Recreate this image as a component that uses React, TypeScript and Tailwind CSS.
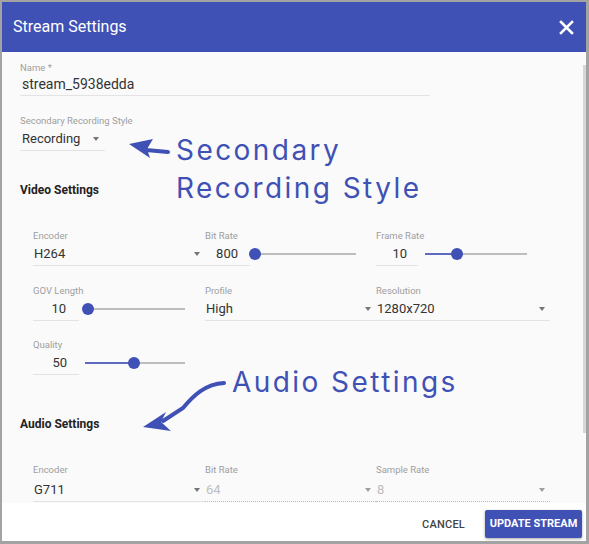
import React from "react";

function Label({ children }: { children: React.ReactNode }) {
  return <div className="whitespace-nowrap text-[9.5px] leading-[12px] text-[#9e9e9e]">{children}</div>;
}

function Caret({ light }: { light?: boolean }) {
  return (
    <span
      className={
        light
          ? "h-0 w-0 border-x-[3.5px] border-t-[4px] border-x-transparent border-t-[#9e9e9e]"
          : "h-0 w-0 border-x-[3.5px] border-t-[4px] border-x-transparent border-t-[#757575]"
      }
    />
  );
}

function Select({ value, disabled }: { value: string; disabled?: boolean }) {
  return (
    <div
      className={
        disabled
          ? "flex h-[24px] items-center justify-between border-b border-dotted border-[#bdbdbd] pr-[5px]"
          : "flex h-[24px] items-center justify-between border-b border-[#e3e3e3] pr-[5px]"
      }
    >
      <span className={disabled ? "pl-[1px] text-[13px] text-[#bdbdbd]" : "pl-[1px] text-[13px] text-[#333]"}>{value}</span>
      <Caret light={disabled} />
    </div>
  );
}

function NumInput({ value, className }: { value: string; className: string }) {
  return (
    <div className={"flex h-[24px] items-center justify-end border-b border-[#e3e3e3] text-[13px] text-[#333] " + className}>
      {value}
    </div>
  );
}

function Slider({ pct, className }: { pct: number; className: string }) {
  return (
    <div className={"relative h-[12px] " + className}>
      <div className="absolute left-0 right-0 top-[5px] h-[2px] bg-[#bdbdbd]" />
      <div className="absolute left-0 top-[5px] h-[2px] bg-[#5c6bc0]" style={{ width: pct + "%" }} />
      <div
        className="absolute top-0 h-[12px] w-[12px] -translate-x-1/2 rounded-full bg-[#3f51b5]"
        style={{ left: pct + "%" }}
      />
    </div>
  );
}

export default function App() {
  return (
    <div className="relative h-[544px] w-[589px] bg-[#a3a3a3] pb-[3px] pl-[2px] pr-[3px] pt-[2px] font-['Roboto',sans-serif]">
      <div className="flex h-full flex-col overflow-hidden">
        {/* header */}
        <div className="flex h-[50px] shrink-0 items-center justify-between bg-[#3f51b5] pl-[11px] pr-[12px]">
          <span className="text-[16px] text-white">Stream Settings</span>
          <svg width="15" height="15" viewBox="0 0 15 15">
            <path d="M2 2 L13 13 M13 2 L2 13" stroke="white" strokeWidth="2.6" strokeLinecap="square" />
          </svg>
        </div>

        {/* body */}
        <div className="relative min-h-0 flex-1 overflow-hidden bg-[#fafafa] pl-[18px] pt-[10px]">
          <div className="absolute right-0 top-[13px] h-[368px] w-[3px] bg-[#d6d6d6]" />

          <div className="w-[410px]">
            <Label>Name *</Label>
            <div className="flex h-[22px] items-center border-b border-[#e3e3e3] pl-[2px] text-[14px] text-[#333]">
              stream_5938edda
            </div>
          </div>

          <div className="mt-[19px] w-[85px]">
            <Label>Secondary Recording Style</Label>
            <div className="flex h-[24px] items-center justify-between border-b border-[#e3e3e3] pl-[2px] pr-[6px]">
              <span className="text-[13px] text-[#333]">Recording</span>
              <Caret />
            </div>
          </div>

          <div className="mt-[32px] text-[12px] font-bold leading-[14px] text-[#222]">Video Settings</div>

          <div className="ml-[13px] mt-[33px] grid w-[517px] grid-cols-[172px_171px_174px]">
            <div>
              <Label>Encoder</Label>
              <Select value="H264" />
            </div>
            <div>
              <Label>Bit Rate</Label>
              <div className="flex items-center">
                <NumInput value="800" className="w-[45px] pr-[12px]" />
                <Slider pct={0} className="ml-[5px] w-[101px]" />
              </div>
            </div>
            <div>
              <Label>Frame Rate</Label>
              <div className="flex items-center">
                <NumInput value="10" className="w-[42px] pr-[11px]" />
                <Slider pct={31} className="ml-[7px] w-[102px]" />
              </div>
            </div>
          </div>

          <div className="ml-[13px] mt-[19px] grid w-[517px] grid-cols-[172px_171px_174px]">
            <div>
              <Label>GOV Length</Label>
              <div className="flex items-center">
                <NumInput value="10" className="w-[46px] pr-[13px]" />
                <Slider pct={0} className="ml-[9px] w-[97px]" />
              </div>
            </div>
            <div>
              <Label>Profile</Label>
              <Select value="High" />
            </div>
            <div>
              <Label>Resolution</Label>
              <Select value="1280x720" />
            </div>
          </div>

          <div className="ml-[13px] mt-[18px] w-[172px]">
            <Label>Quality</Label>
            <div className="flex items-center">
              <NumInput value="50" className="w-[46px] pr-[12px]" />
              <Slider pct={49} className="ml-[6px] w-[100px]" />
            </div>
          </div>

          <div className="mt-[42px] text-[12px] font-bold leading-[14px] text-[#222]">Audio Settings</div>

          <div className="ml-[13px] mt-[33px] grid w-[517px] grid-cols-[172px_171px_174px]">
            <div>
              <Label>Encoder</Label>
              <div className="pt-[2px]">
                <Select value="G711" />
              </div>
            </div>
            <div>
              <Label>Bit Rate</Label>
              <div className="pt-[2px]">
                <Select value="64" disabled />
              </div>
            </div>
            <div>
              <Label>Sample Rate</Label>
              <div className="pt-[2px]">
                <Select value="8" disabled />
              </div>
            </div>
          </div>
        </div>

        {/* footer */}
        <div className="flex h-[38px] shrink-0 items-start justify-end bg-white pr-[4px] pt-[7px]">
          <button className="mr-[12px] mt-[7px] px-[8px] text-[11px] font-medium tracking-[0.02em] text-[#444]">CANCEL</button>
          <button className="h-[28px] w-[97px] rounded-[2px] bg-[#3f51b5] text-[11px] font-bold text-white shadow-[0_1px_3px_rgba(0,0,0,0.35)]">
            UPDATE STREAM
          </button>
        </div>
      </div>

      {/* annotations */}
      <div className="absolute left-[176px] top-[131px] text-[28px] leading-[38px] tracking-[0.087em] text-[#3f51b5] font-['Inter',sans-serif]">
        <div>Secondary</div>
        <div>Recording Style</div>
      </div>
      <div className="absolute left-[232px] top-[363px] whitespace-nowrap text-[28px] leading-[38px] tracking-[0.087em] text-[#3f51b5] font-['Inter',sans-serif]">
        Audio Settings
      </div>
      <svg className="pointer-events-none absolute left-0 top-0" width="589" height="544" viewBox="0 0 589 544">
        <path d="M146 150 L168 152" stroke="#3f51b5" strokeWidth="4" strokeLinecap="round" />
        <polygon points="129,144 153,139 147,149 150,158" fill="#3f51b5" />
        <path d="M224 383 C 205 384 193 396 183 408 L 163 421" stroke="#3f51b5" strokeWidth="4" fill="none" strokeLinecap="round" />
        <polygon points="143,427 166,412 161,422 171,431" fill="#3f51b5" />
      </svg>
    </div>
  );
}
